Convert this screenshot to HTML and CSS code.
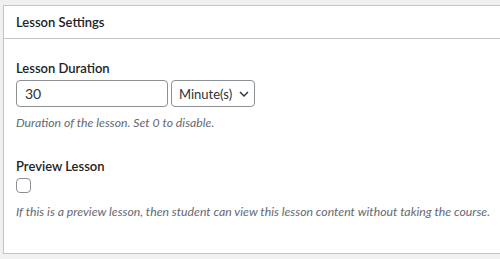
FILE: index.html
```html
<!DOCTYPE html>
<html lang="en">
<head>
    <meta charset="UTF-8">
    <meta name="viewport" content="width=device-width, initial-scale=1.0">
    <title>Lesson Settings</title>
    <link rel="stylesheet" href="styles.css">
</head>
<body>
    <div class="postbox">
        <div class="postbox-header">
            <h2>Lesson Settings</h2>
        </div>
        <div class="inside">
            <div class="field">
                <label class="field-label" for="duration">Lesson Duration</label>
                <div class="duration-row">
                    <input type="text" id="duration" class="duration-input" value="30">
                    <div class="unit-select">
                        <span>Minute(s)</span>
                        <svg width="10" height="6" viewBox="0 0 10 6"><path d="M1 1l4 4 4-4" fill="none" stroke="#2c3338" stroke-width="1.4"/></svg>
                    </div>
                </div>
                <p class="description">Duration of the lesson. Set 0 to disable.</p>
            </div>

            <div class="field">
                <label class="field-label" for="preview">Preview Lesson</label>
                <span class="checkbox" id="preview"></span>
                <p class="description after-checkbox">If this is a preview lesson, then student can view this lesson content without taking the course.</p>
            </div>
        </div>
    </div>
</body>
</html>
```

FILE: styles.css
```css
body {
    margin: 0;
    padding: 5px 0 0 3px;
    background: #f0f0f1;
    font-family: Lato, "Noto Sans", sans-serif;
    color: #1d2327;
    overflow: hidden;
}
.postbox {
    width: 520px;
    height: 247px;
    background: #fff;
    border: 1px solid #c3c4c7;
    box-shadow: 0 1px 1px rgba(0,0,0,0.04);
}
.postbox-header {
    height: 32px;
    border-bottom: 1px solid #c3c4c7;
    display: flex;
    align-items: center;
    padding-left: 12px;
}
.postbox-header h2 {
    margin: 0;
    font-size: 13px;
    font-weight: 600;
}
.inside {
    padding: 19px 12px 0 12px;
}
.field {
    margin-bottom: 23px;
}
.field-label {
    display: block;
    font-size: 13px;
    font-weight: 600;
    line-height: 20px;
    margin-bottom: 2px;
}
.duration-row {
    display: flex;
    gap: 3px;
}
.duration-input {
    box-sizing: border-box;
    width: 152px;
    height: 27px;
    margin: 0;
    padding: 0 8px;
    border: 1px solid #8c8f94;
    border-radius: 4px;
    font-family: inherit;
    font-size: 14px;
    color: #2c3338;
}
.unit-select {
    box-sizing: border-box;
    width: 84px;
    height: 27px;
    border: 1px solid #8c8f94;
    border-radius: 4px;
    display: flex;
    align-items: center;
    gap: 7px;
    padding-left: 7px;
    font-size: 13px;
    color: #2c3338;
}
.description {
    margin: 6px 0 0;
    font-size: 12.25px;
    font-style: italic;
    line-height: 20px;
    white-space: nowrap;
    color: #646970;
}
.description.after-checkbox {
    margin-top: 9px;
}
.checkbox {
    display: block;
    box-sizing: border-box;
    width: 15px;
    height: 15px;
    border: 1px solid #8c8f94;
    border-radius: 4px;
    margin: 2px 0 0;
}
```
